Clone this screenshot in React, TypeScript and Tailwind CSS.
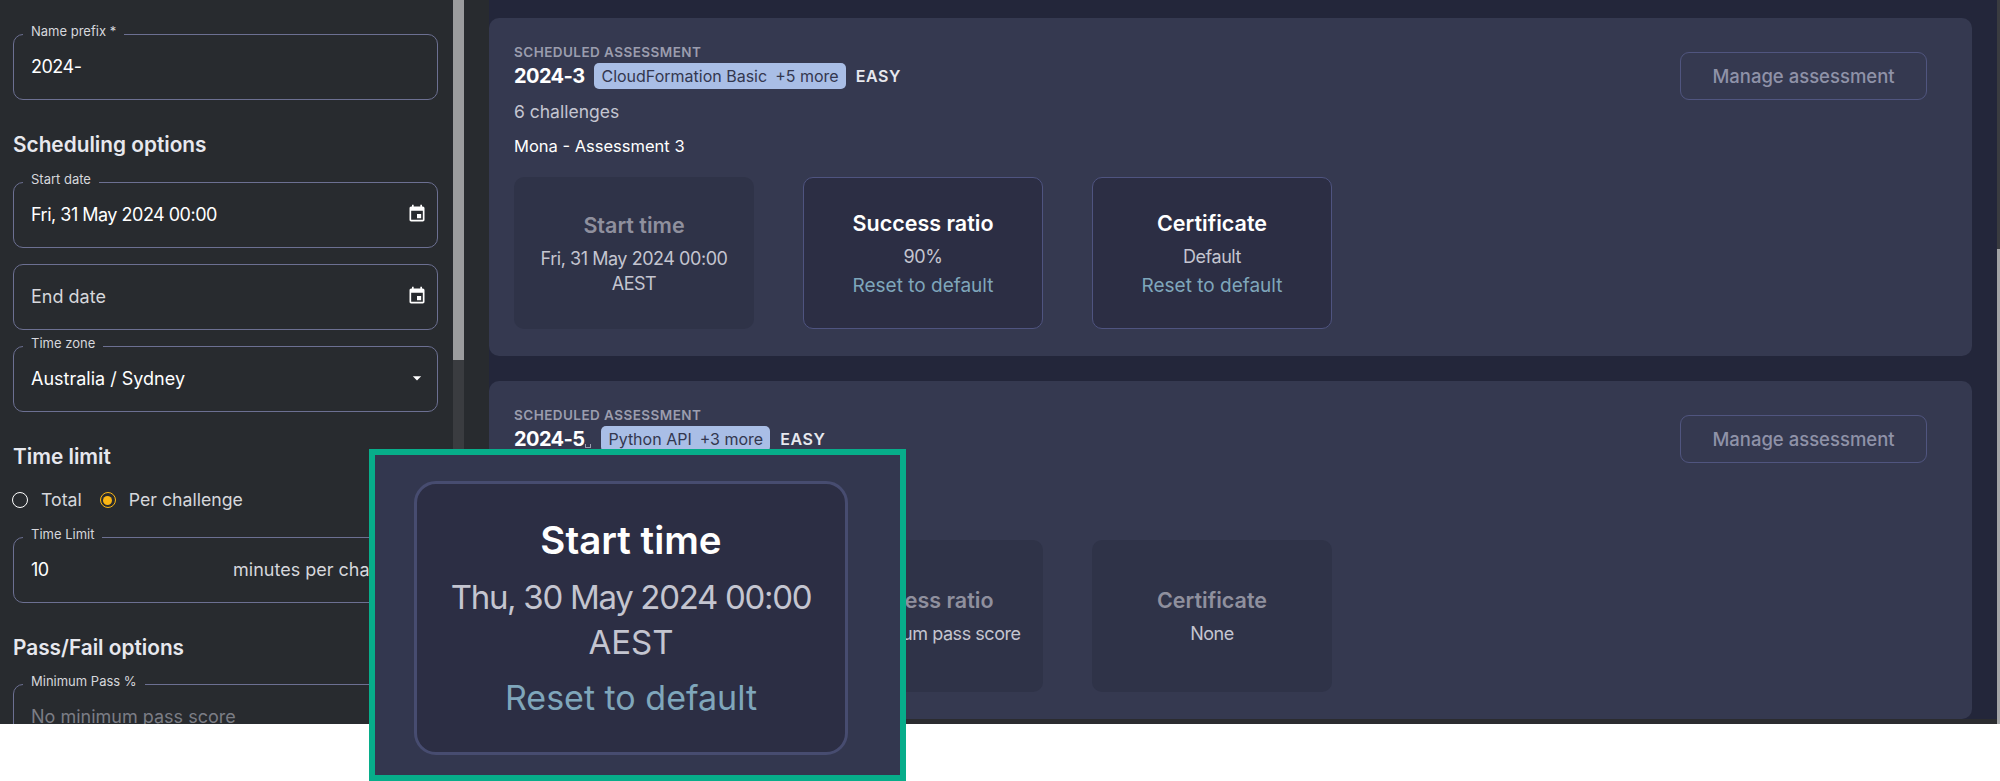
const ff = "font-['Inter','Liberation_Sans',sans-serif]";

function Calendar() {
  return (
    <svg viewBox="0 0 24 24" className="w-5 h-5 fill-white shrink-0">
      <path d="M17 12h-5v5h5v-5zM16 1v2H8V1H6v2H5c-1.11 0-1.99.9-1.99 2L3 19c0 1.1.89 2 2 2h14c1.1 0 2-.9 2-2V5c0-1.1-.9-2-2-2h-1V1h-2zm3 18H5V8h14v11z" />
    </svg>
  );
}

function Field({ label, value, muted, placeholder, digits, icon, className }: { label?: string; value: string; muted?: boolean; placeholder?: boolean; digits?: boolean; icon?: React.ReactNode; className?: string }) {
  return (
    <div className={`relative h-[66px] rounded-[10px] border-[1.5px] border-[#6c7092] flex items-center pl-[17px] pr-[10px] pb-[2px] justify-between ${className ?? ""}`}>
      {label && (
        <span className="absolute -top-[12px] left-[9px] bg-[#282b2f] px-[8px] text-[13px] leading-[16px] text-[#d6d7dc]">{label}</span>
      )}
      <span className={`text-[18px] ${digits ? "tracking-[-0.5px]" : ""} ${placeholder ? "text-[#7b7d85]" : muted ? "text-[#d6d7dc]" : "text-white"}`}>{value}</span>
      {icon}
    </div>
  );
}

function Heading({ children, className }: { children: React.ReactNode; className?: string }) {
  return <h3 className={`text-[20.8px] leading-[28px] font-semibold text-[#e7e8ee] ${className ?? ""}`}>{children}</h3>;
}

function Tile({ title, lines, reset, active }: { title: string; lines: string[]; reset?: boolean; active?: boolean }) {
  return (
    <div className={`w-[240px] h-[152px] rounded-[10px] pt-[2px] flex flex-col items-center justify-center text-center ${active ? "bg-[#2c2e44] border border-[#4f5480]" : "bg-[#2f3348]"}`}>
      <div className={`text-[21.5px] leading-[28px] font-semibold ${active ? "text-white" : "text-[#8f909e]"}`}>{title}</div>
      <div className="mt-[7px] text-[18px] leading-[25.5px] tracking-[-0.45px] text-[#c4c5d0] whitespace-nowrap">
        {lines.map((l) => (
          <div key={l}>{l}</div>
        ))}
      </div>
      {reset && <div className="mt-[4px] text-[19px] leading-[25px] text-[#7fa6bb]">Reset to default</div>}
    </div>
  );
}

function Card({ name, topic, more, by, count, tiles, mark }: { name: string; topic: string; more: string; by?: string; count?: string; tiles: React.ReactNode; mark?: boolean }) {
  return (
    <section className="relative h-[338px] rounded-[10px] bg-[#353950] pl-[25px] pr-[45px] pt-[26px]">
      <div className="text-[13.5px] leading-[17px] font-semibold tracking-[0.45px] uppercase text-[#9b9dae]">Scheduled assessment</div>
      <div className="flex items-center h-[26px] mt-[2.5px]">
        <span className="text-[20px] font-bold tracking-[-0.6px] text-white">{name}</span>
        {mark && <span className="ml-[1px] mt-[14px] w-[6px] h-[4px] border-x border-b border-[#9b9dae]" />}
        <span className="ml-[10px] h-[26px] rounded-[5px] bg-[#a9bee6] px-[7px] flex items-center gap-[8px] text-[16px] text-[#33374f]">
          <span>{topic}</span>
          <span>{more}</span>
        </span>
        <span className="ml-[10px] text-[16px] font-semibold tracking-[0.6px] text-[#e7e8ee]">EASY</span>
      </div>
      <div className="mt-[10.5px] h-[24px] text-[17.5px] leading-[24px] text-[#c4c5d0]">{count}</div>
      <div className="mt-[10px] h-[24px] text-[16.5px] leading-[24px] text-white">{by}</div>
      <div className="mt-[19px] flex gap-[49px]">{tiles}</div>
      <button className="absolute right-[45px] top-[34px] w-[247px] h-[48px] rounded-[9px] border-[1.5px] border-[#50557f] pt-[2px] text-[18.5px] font-medium text-[#8f92a8]">Manage assessment</button>
    </section>
  );
}

export default function App() {
  return (
    <div className={`relative w-[2000px] h-[781px] bg-white overflow-hidden ${ff}`}>
      <div className="flex h-[724px] overflow-hidden bg-[#2b2c30]">
        <aside className="w-[489px] shrink-0 bg-[#282b2f] flex">
          <div className="w-[453px] pl-[13px] pr-[15px] pt-[34px]">
            <Field label="Name prefix *" value="2024-" digits />
            <Heading className="mt-[31px]">Scheduling options</Heading>
            <Field className="mt-[23px]" label="Start date" value="Fri, 31 May 2024 00:00" digits icon={<Calendar />} />
            <Field className="mt-[16px]" value="End date" muted icon={<Calendar />} />
            <Field
              className="mt-[16px]"
              label="Time zone"
              value="Australia / Sydney"
              icon={
                <svg viewBox="0 0 24 24" className="w-5 h-5 fill-white shrink-0">
                  <path d="M7 10l5 5 5-5z" />
                </svg>
              }
            />
            <Heading className="mt-[31px]">Time limit</Heading>
            <div className="mt-[15px] -ml-[1px] flex items-center h-[28px] text-[17.7px] text-[#d6d7dc]">
              <span className="w-[16px] h-[16px] rounded-full border-[1.5px] border-white" />
              <span className="ml-[13px]">Total</span>
              <span className="ml-[18px] w-[16px] h-[16px] rounded-full border-[1.5px] border-[#fbb614] flex items-center justify-center">
                <span className="w-[9px] h-[9px] rounded-full bg-[#fbb614]" />
              </span>
              <span className="ml-[13px]">Per challenge</span>
            </div>
            <Field className="mt-[23px] !pr-[16px]" label="Time Limit" value="10" digits icon={<span className="text-[18px] text-[#d6d7dc] whitespace-nowrap">minutes per challenge</span>} />
            <Heading className="mt-[31px]">Pass/Fail options</Heading>
            <Field className="mt-[22px]" label="Minimum Pass %" value="No minimum pass score" placeholder />
          </div>
          <div className="w-[11px] h-full bg-[#3a3c40]">
            <div className="h-[360px] bg-[#9b9c9e]" />
          </div>
        </aside>
        <main className="flex-1 h-[719px] bg-[#23263a] relative">
          <div className="w-[1483px] pt-[17.5px] flex flex-col gap-[25px]">
            <Card
              name="2024-3"
              topic="CloudFormation Basic"
              more="+5 more"
              count="6 challenges"
              by="Mona - Assessment 3"
              tiles={
                <>
                  <Tile title="Start time" lines={["Fri, 31 May 2024 00:00", "AEST"]} />
                  <Tile title="Success ratio" lines={["90%"]} reset active />
                  <Tile title="Certificate" lines={["Default"]} reset active />
                </>
              }
            />
            <Card
              name="2024-5"
              topic="Python API"
              more="+3 more"
              mark
              tiles={
                <>
                  <div className="w-[240px] h-[152px]" />
                  <Tile title="Success ratio" lines={["No minimum pass score"]} />
                  <Tile title="Certificate" lines={["None"]} />
                </>
              }
            />
          </div>
        </main>
        <div className="absolute right-0 top-0 w-[3px] h-[724px] bg-[#3a3c40]">
          <div className="mt-[249px] h-[475px] bg-[#a3a4a6]" />
        </div>
      </div>
      <div className="absolute left-[369px] top-[449px] w-[537px] h-[332px] border-[6px] border-[#07ad8a] bg-[#33374f]">
        <div className="absolute left-[39px] top-[26px] w-[434px] h-[274px] rounded-[22px] border-[3px] border-[#474c70] bg-[#2c2e44] flex flex-col items-center justify-center text-center">
          <div className="text-[38.5px] leading-[48px] font-semibold text-white">Start time</div>
          <div className="mt-[11px] text-[33px] leading-[45px] tracking-[-1.3px] text-[#c4c5d0]">Thu, 30 May 2024 00:00</div>
          <div className="text-[33px] leading-[45px] text-[#c4c5d0]">AEST</div>
          <div className="mt-[10px] text-[34px] leading-[45px] text-[#7fa6bb]">Reset to default</div>
        </div>
      </div>
    </div>
  );
}
